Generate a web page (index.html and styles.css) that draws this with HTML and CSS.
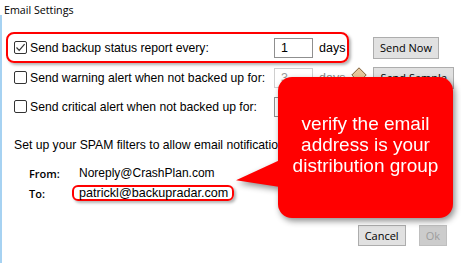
FILE: index.html
```html
<!DOCTYPE html>
<html lang="en">
	<head>
		<meta charset="utf-8">
		<title>Email Settings</title>
		<link rel="stylesheet" href="styles.css">
	</head>
	<body>
		<div class="title">Email Settings</div>
		<div class="panel">
			<div class="row">
				<div class="opt hl">
					<span class="box"><svg width="11" height="11" viewBox="0 0 11 11"><path d="M1.5 5.5 L4.2 8.3 L9.6 2.2" fill="none" stroke="#333" stroke-width="1.2"/></svg></span>
					<span class="label">Send backup status report every:</span>
					<span class="field">1</span>
					<span class="unit">days</span>
				</div>
				<button class="btn first">Send Now</button>
			</div>

			<div class="row plain">
				<span class="box"></span>
				<span class="label">Send warning alert when not backed up for:</span>
				<span class="field off">3</span>
				<span class="unit off">days</span>
				<svg class="warn" width="16" height="16" viewBox="0 0 16 16"><path d="M8 0.8 L15.2 8 L8 15.2 L0.8 8 Z" fill="#e6c79c" stroke="#7d5f3a" stroke-width="1"/></svg>
				<button class="btn">Send Sample</button>
			</div>

			<div class="row plain">
				<span class="box"></span>
				<span class="label">Send critical alert when not backed up for:</span>
				<span class="field"></span>
			</div>

			<p class="note">Set up your SPAM filters to allow email notifications</p>

			<div class="addr">
				<span class="key">From:</span>
				<span class="val">Noreply@CrashPlan.com</span>
				<span class="key">To:</span>
				<span class="val"><span class="hl-mail">patrickl@backupradar.com</span></span>
			</div>

			<div class="actions">
				<button class="btn">Cancel</button>
				<button class="btn disabled">Ok</button>
			</div>

			<div class="callout">
				<p>verify the email<br>address is your<br>distribution group</p>
			</div>
		</div>
	</body>
</html>
```

FILE: styles.css
```css
* {
	box-sizing: border-box;
}
body {
	margin: 0;
	background: #fff;
	font-family: "Liberation Sans", Arial, sans-serif;
	font-size: 12px;
	color: #000;
}
.title {
	height: 15px;
	padding: 2px 0 0 4px;
	font-family: "Open Sans", sans-serif;
	font-size: 10.7px;
	line-height: 16px;
}
.panel {
	position: relative;
	height: 248px;
	border-left: 2px solid #a6d2f2;
	padding: 17px 14px 0 0;
}
.row {
	display: flex;
	align-items: center;
	height: 29px;
}
.row.plain {
	padding-left: 12px;
}
.opt {
	display: flex;
	align-items: center;
}
.hl {
	width: 343px;
	height: 31px;
	margin-left: 4px;
	padding-left: 6px;
	border: 2px solid #f00;
	border-radius: 8px;
	box-shadow: 2px 2px 3px rgba(0, 0, 0, 0.3);
}
.row:first-child {
	height: 31px;
}
.box {
	display: flex;
	align-items: center;
	justify-content: center;
	flex: none;
	width: 13px;
	height: 13px;
	border: 1px solid #333;
	border-radius: 2px;
	background: #fff;
}
.label {
	flex: none;
	width: 247px;
	padding-left: 3px;
	font-size: 12.2px;
	white-space: nowrap;
}
.field {
	flex: none;
	width: 39px;
	height: 20px;
	padding-left: 6px;
	border: 1px solid #8f8f8f;
	line-height: 18px;
	font-size: 12.5px;
}
.field.off {
	border-color: #cfcfcf;
	color: #9a9a9a;
}
.unit {
	margin-left: 6px;
	font-size: 12.5px;
}
.unit.off {
	color: #8a8a8a;
}
.warn {
	flex: none;
	margin: -6px 0 0 6px;
}
.btn {
	height: 22px;
	padding: 0 6px;
	border: 1px solid #adadad;
	background: #e1e1e1;
	font-family: "Open Sans", sans-serif;
	font-size: 11px;
	color: #000;
	white-space: nowrap;
}
.row .btn {
	flex: none;
	margin-left: 6px;
}
.row .btn.first {
	margin-left: 24px;
}
.btn.disabled {
	border-color: #bfbfbf;
	background: #cccccc;
	color: #9d9d9d;
}
.note {
	margin: 16px 0 0 12px;
	line-height: 16px;
	font-size: 12.2px;
}
.addr {
	display: grid;
	grid-template-columns: 50px auto;
	grid-auto-rows: 20px;
	align-items: center;
	margin-top: 10px;
	padding-left: 27px;
}
.key {
	font-family: "Open Sans", sans-serif;
	font-size: 11px;
	font-weight: 600;
}
.hl-mail {
	display: inline-block;
	margin-left: -7px;
	padding: 0 4px 0 5px;
	border: 2px solid #f00;
	border-radius: 6px;
	line-height: 12px;
	font-size: 12.6px;
	box-shadow: 2px 2px 3px rgba(0, 0, 0, 0.3);
}
.actions {
	display: flex;
	justify-content: flex-end;
	gap: 13px;
	margin-top: 22px;
}
.actions .btn {
	height: 21px;
}
.callout {
	position: absolute;
	left: 276px;
	top: 62px;
	width: 175px;
	height: 141px;
	padding-top: 36px;
	border-radius: 14px;
	background: #f00;
	color: #fff;
	text-align: center;
	filter: drop-shadow(2px 3px 3px rgba(0, 0, 0, 0.45));
}
.callout::before {
	content: "";
	position: absolute;
	left: -42px;
	top: 83px;
	width: 44px;
	height: 27px;
	background: #f00;
	clip-path: polygon(100% 0, 0 75%, 100% 100%);
}
.callout p {
	margin: 0;
	font-size: 19px;
	line-height: 21px;
}
```
